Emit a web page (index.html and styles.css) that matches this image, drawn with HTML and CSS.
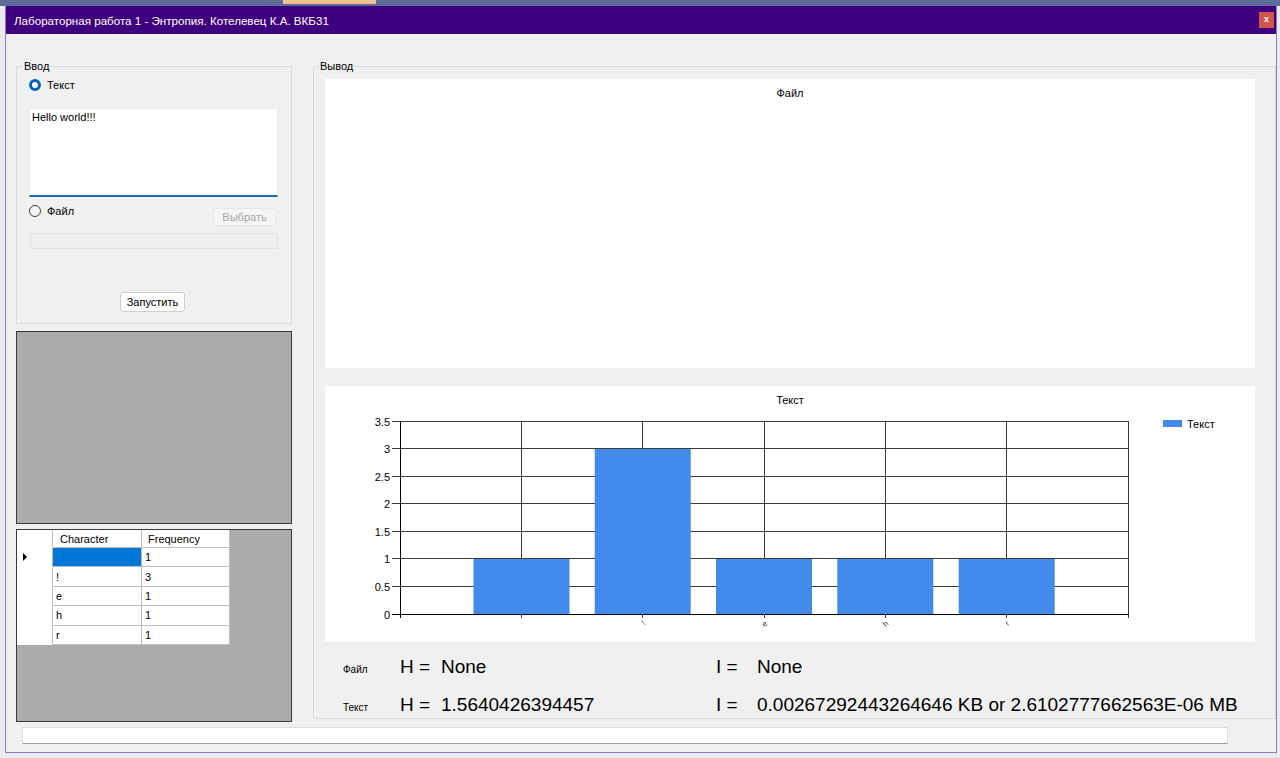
FILE: index.html
```html
<!DOCTYPE html>
<html lang="ru">
<head>
<meta charset="utf-8">
<title>Лабораторная работа 1 - Энтропия</title>
<link rel="stylesheet" href="styles.css">
</head>
<body>
<div class="window">
  <div class="titlebar">
    <span class="title">Лабораторная работа 1 - Энтропия. Котелевец К.А. ВКБ31</span>
    <div class="close">x</div>
  </div>
  <div class="client">
    <div class="main">
      <div class="left">
        <div class="group input-group">
          <span class="group-label">Ввод</span>
          <div class="radio-row first"><span class="radio checked"></span><span>Текст</span></div>
          <div class="textarea">Hello world!!!</div>
          <div class="file-row">
            <div class="radio-row"><span class="radio"></span><span>Файл</span></div>
            <div class="btn disabled">Выбрать</div>
          </div>
          <div class="path-box"></div>
          <div class="btn run">Запустить</div>
        </div>
        <div class="gray-panel"></div>
        <div class="gray-panel grid-panel">
          <table class="grid">
            <tr class="head"><td class="rh"></td><td class="c1">Character</td><td class="c2">Frequency</td></tr>
            <tr><td class="rh"><span class="arrow"></span></td><td class="c1 sel"></td><td class="c2">1</td></tr>
            <tr><td class="rh"></td><td class="c1">!</td><td class="c2">3</td></tr>
            <tr><td class="rh"></td><td class="c1">e</td><td class="c2">1</td></tr>
            <tr><td class="rh"></td><td class="c1">h</td><td class="c2">1</td></tr>
            <tr><td class="rh"></td><td class="c1">r</td><td class="c2">1</td></tr>
          </table>
        </div>
      </div>
      <div class="group output-group">
        <span class="group-label">Вывод</span>
        <div class="chart chart-file"><div class="chart-title">Файл</div></div>
        <div class="chart chart-text">
          <svg class="chart-svg" width="930" height="256" viewBox="0 0 930 256">
            <text class="ct" x="465" y="14" text-anchor="middle" dominant-baseline="central">Текст</text>
            <g class="hgrid" stroke="#3a3a3a" stroke-width="1">
              <line x1="67" y1="35.5" x2="803" y2="35.5"/>
              <line x1="67" y1="62.5" x2="803" y2="62.5"/>
              <line x1="67" y1="90.5" x2="803" y2="90.5"/>
              <line x1="67" y1="117.5" x2="803" y2="117.5"/>
              <line x1="67" y1="145.5" x2="803" y2="145.5"/>
              <line x1="67" y1="172.5" x2="803" y2="172.5"/>
              <line x1="67" y1="200.5" x2="803" y2="200.5"/>
            </g>
            <g class="vgrid" stroke="#3a3a3a" stroke-width="1">
              <line x1="196.5" y1="35" x2="196.5" y2="232"/>
              <line x1="317.5" y1="35" x2="317.5" y2="232"/>
              <line x1="439.5" y1="35" x2="439.5" y2="232"/>
              <line x1="560.5" y1="35" x2="560.5" y2="232"/>
              <line x1="681.5" y1="35" x2="681.5" y2="232"/>
              <line x1="803.5" y1="35" x2="803.5" y2="232"/>
            </g>
            <g fill="#428bea">
              <rect x="148.5" y="173" width="96" height="55"/>
              <rect x="269.7" y="63" width="96" height="165"/>
              <rect x="391" y="173" width="96" height="55"/>
              <rect x="512.3" y="173" width="96" height="55"/>
              <rect x="633.7" y="173" width="96" height="55"/>
            </g>
            <g stroke="#000" stroke-width="1">
              <line x1="75.5" y1="35" x2="75.5" y2="232"/>
              <line x1="67" y1="228.5" x2="804" y2="228.5"/>
            </g>
            <g class="ylab" text-anchor="end" dominant-baseline="central">
              <text x="65" y="35.5">3.5</text>
              <text x="65" y="62.5">3</text>
              <text x="65" y="90.5">2.5</text>
              <text x="65" y="117.5">2</text>
              <text x="65" y="145.5">1.5</text>
              <text x="65" y="172.5">1</text>
              <text x="65" y="200.5">0.5</text>
              <text x="65" y="228.5">0</text>
            </g>
            <g class="xlab" text-anchor="end">
              <text x="321" y="238" transform="rotate(-45 321 238)">!</text>
              <text x="443" y="238" transform="rotate(-45 443 238)">e</text>
              <text x="564" y="238" transform="rotate(-45 564 238)">h</text>
              <text x="685" y="238" transform="rotate(-45 685 238)">r</text>
            </g>
            <rect x="838" y="34" width="19" height="7" fill="#428bea"/>
            <text class="ct" x="862" y="38" dominant-baseline="central">Текст</text>
          </svg>
        </div>
        <div class="results">
          <span class="small">Файл</span><span class="big">H =</span><span class="big">None</span><span class="big">I =</span><span class="big">None</span>
          <span class="small">Текст</span><span class="big">H =</span><span class="big">1.5640426394457</span><span class="big">I =</span><span class="big">0.00267292443264646 KB or 2.6102777662563E-06 MB</span>
        </div>
      </div>
    </div>
    <div class="progress"></div>
  </div>
</div>
</body>
</html>
```
FILE: styles.css
```css
html, body {
  margin: 0;
  padding: 0;
}
body {
  width: 1280px;
  height: 758px;
  overflow: hidden;
  font-family: "Liberation Sans", Arial, sans-serif;
  font-size: 11px;
  color: #000;
  background:
    linear-gradient(to right, transparent 283px, #efc28f 283px, #efc28f 376px, transparent 376px) 0 0 / 100% 4px no-repeat,
    linear-gradient(#5d6d97 0, #5d6d97 6px, #ebebf0 6px);
}
.window {
  margin: 6px 0 0 5px;
  width: 1272px;
  height: 747px;
  box-sizing: border-box;
  border: 1px solid #8f78c9;
  border-top: 0;
  background: #f0f0f0;
  display: flex;
  flex-direction: column;
  overflow: hidden;
}
.titlebar {
  height: 28px;
  flex: none;
  background: #3f0080;
  color: #fff;
  display: flex;
  align-items: center;
  justify-content: space-between;
  padding: 0 2px 0 8px;
  font-size: 11.6px;
}
.close {
  width: 15px;
  height: 16px;
  background: #d35549;
  color: #fff;
  font-size: 9px;
  line-height: 15px;
  text-align: center;
  font-weight: bold;
}
.client {
  flex: 1;
  padding: 32px 0 0 10px;
  display: flex;
  flex-direction: column;
}
.main {
  display: flex;
  height: 656px;
}
.left {
  width: 276px;
  flex: none;
  display: flex;
  flex-direction: column;
}
.group {
  position: relative;
  box-sizing: border-box;
  border: 1px solid #dadada;
}
.group-label {
  position: absolute;
  top: -7px;
  left: 6px;
  line-height: 12px;
  padding: 0 1px;
  background: #f0f0f0;
  font-size: 11px;
}
.output-group .group-label {
  left: 5px;
}
.input-group {
  height: 258px;
  padding-left: 12px;
  display: flex;
  flex-direction: column;
  align-items: flex-start;
}
.radio-row {
  display: flex;
  align-items: center;
  gap: 6px;
  height: 12px;
  line-height: 12px;
}
.radio-row.first {
  margin-top: 12px;
}
.radio {
  width: 12px;
  height: 12px;
  box-sizing: border-box;
  border-radius: 50%;
  border: 1px solid #404040;
  background: #f7f7f7;
}
.radio.checked {
  border: 3.5px solid #0063b8;
  background: #fff;
}
.textarea {
  margin-top: 17px;
  width: 249px;
  height: 89px;
  box-sizing: border-box;
  background: #fff;
  border: 1px solid #ececec;
  border-bottom: 2px solid #1b69b3;
  padding: 2px 2px;
  line-height: 13px;
}
.file-row {
  margin-top: 8px;
  width: 249px;
  height: 21px;
  display: flex;
  justify-content: space-between;
  align-items: flex-start;
}
.btn {
  box-sizing: border-box;
  display: flex;
  align-items: center;
  justify-content: center;
  border-radius: 3px;
}
.btn.disabled {
  margin-top: 3px;
  margin-right: 2px;
  width: 63px;
  height: 18px;
  background: #f5f5f5;
  border: 1px solid #e6e6e6;
  color: #a6a6a6;
}
.path-box {
  margin-top: 7px;
  margin-left: 1px;
  width: 248px;
  height: 16px;
  box-sizing: border-box;
  border: 1px solid #e3e3e3;
  background: #efefef;
}
.btn.run {
  margin-top: 43px;
  margin-left: 91px;
  width: 65px;
  height: 20px;
  background: #fdfdfd;
  border: 1px solid #cfcfcf;
}
.gray-panel {
  box-sizing: border-box;
  height: 193px;
  margin-top: 7px;
  background: #ababab;
  border: 1px solid #3a3a3a;
}
.grid-panel {
  margin-top: 5px;
}
.grid {
  border-collapse: separate;
  border-spacing: 0;
  background: #fff;
  font-size: 11px;
}
.grid td {
  padding: 0;
  box-sizing: border-box;
  border-right: 1px solid #bdbdbd;
  border-bottom: 1px solid #bdbdbd;
  height: 19.4px;
  vertical-align: middle;
}
.grid tr.head td {
  height: 18px;
}
.grid td.rh {
  width: 36px;
  border-bottom-color: #fff;
  padding-left: 6px;
}
.grid td.c1 {
  width: 89px;
  padding-left: 3px;
}
.grid td.c2 {
  width: 88px;
  padding-left: 3px;
}
.grid tr.head td.c1 {
  padding-left: 7px;
}
.grid tr.head td.c2 {
  padding-left: 6px;
}
.grid td.sel {
  background: #0078d7;
}
.arrow {
  display: block;
  width: 0;
  height: 0;
  border-left: 4px solid #000;
  border-top: 4px solid transparent;
  border-bottom: 4px solid transparent;
}
.output-group {
  margin-left: 21px;
  width: 963px;
  height: 653px;
  flex: none;
  padding-left: 11px;
}
.chart {
  width: 930px;
  background: #fff;
}
.chart-file {
  margin-top: 12px;
  height: 289px;
}
.chart-title {
  text-align: center;
  padding-top: 8px;
  line-height: 12px;
}
.chart-text {
  margin-top: 18px;
  height: 256px;
}
.chart-svg {
  display: block;
  font-family: "Liberation Sans", Arial, sans-serif;
}
.ct, .ylab text {
  font-size: 11px;
  fill: #000;
}
.xlab text {
  font-size: 8px;
  fill: #333;
}
.results {
  margin-top: 14px;
  padding-left: 18px;
  display: grid;
  grid-template-columns: 57px 41px 275px 41px auto;
  row-gap: 13px;
  align-items: baseline;
  line-height: 22px;
}
.small {
  font-size: 10px;
}
.big {
  font-size: 19px;
  white-space: nowrap;
}
.progress {
  margin-top: 5px;
  margin-left: 6px;
  width: 1206px;
  height: 17px;
  box-sizing: border-box;
  background: #fff;
  border: 1px solid #dedede;
  border-bottom-color: #9e9e9e;
}
```
